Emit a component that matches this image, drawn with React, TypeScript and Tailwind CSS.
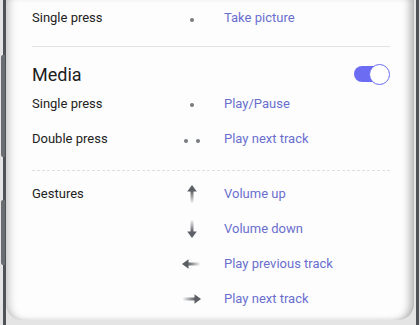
import type { ReactNode } from 'react'

const font = { fontFamily: 'Roboto, "Noto Sans", sans-serif' }

function Dot() {
  return <span className="block w-[4px] h-[4px] rounded-full bg-[#777a7e]" />
}

function Arrow({ dir }: { dir: 'up' | 'down' | 'left' | 'right' }) {
  const rot = { up: 0, down: 180, left: 270, right: 90 }[dir]
  const id = `fade-${dir}`
  return (
    <svg width="18" height="18" viewBox="0 0 18 18" aria-hidden>
      <defs>
        <linearGradient id={id} x1="0" y1="0" x2="0" y2="1">
          <stop offset="0" stopColor="#5c5f63" stopOpacity="1" />
          <stop offset="1" stopColor="#5c5f63" stopOpacity="0.05" />
        </linearGradient>
      </defs>
      <g transform={`rotate(${rot} 9 9)`}>
        <polygon points="9,0 13.8,6.5 4.2,6.5" fill="#5c5f63" />
        <rect x="7.5" y="6" width="3" height="12" fill={`url(#${id})`} />
      </g>
    </svg>
  )
}

function Row({
  label,
  icon,
  action,
  className = '',
}: {
  label: string
  icon: ReactNode
  action: string
  className?: string
}) {
  return (
    <div className={`flex items-center h-[24px] ${className}`}>
      <span className="w-[144px] text-[13px] text-[#222]">{label}</span>
      <span className="w-[32px] flex justify-center items-center gap-[8px]">
        {icon}
      </span>
      <span className="ml-[16px] text-[13px] text-[#6a6fcf]">{action}</span>
    </div>
  )
}

export default function App() {
  return (
    <div
      className="relative w-[420px] h-[325px] overflow-hidden bg-[#e4e4e4] flex"
      style={font}
    >
      {/* left frame */}
      <div className="ml-[3px] w-[3px] h-full bg-[#4f5256]" />
      <div className="absolute left-[1px] top-[55px] w-[4px] h-[102px] rounded-l-[2px] bg-[#6a6d72]" />
      <div className="absolute left-[1px] top-[200px] w-[4px] h-[65px] rounded-l-[2px] bg-[#6a6d72]" />

      {/* screen */}
      <div className="flex-1 h-[320px] bg-[#fdfdfd] rounded-b-[16px] shadow-[inset_9px_0_8px_-6px_rgba(0,0,0,0.22),inset_-10px_0_9px_-6px_rgba(0,0,0,0.3),inset_0_-4px_6px_-4px_rgba(0,0,0,0.12)] pl-[26px] pr-[24px]">
        <Row
          label="Single press"
          icon={<span className="mt-[4px]"><Dot /></span>}
          action="Take picture"
          className="mt-[6px]"
        />
        <div className="mt-[16px] h-px bg-[#e3e3e3]" />

        <div className="mt-[15px] h-[24px] flex items-center justify-between">
          <span className="text-[18px] text-[#1d1d1d]">Media</span>
          <span className="relative w-[36px] h-[21px] flex items-center">
            <span className="absolute left-0 right-[4px] h-[16px] rounded-full bg-[#6c6cf2]" />
            <span className="absolute right-0 w-[21px] h-[21px] rounded-full bg-white border-[1.5px] border-[#6c6cf2]" />
          </span>
        </div>

        <Row
          label="Single press"
          icon={<span className="mt-[2px]"><Dot /></span>}
          action="Play/Pause"
          className="mt-[6px]"
        />
        <Row
          label="Double press"
          icon={
            <>
              <span className="mt-[4px]"><Dot /></span>
              <span className="mt-[4px]"><Dot /></span>
            </>
          }
          action="Play next track"
          className="mt-[11px]"
        />
        <div className="mt-[19px] border-t border-dashed border-[#dedede]" />

        <Row
          label="Gestures"
          icon={<Arrow dir="up" />}
          action="Volume up"
          className="mt-[11px]"
        />
        <Row
          label=""
          icon={<Arrow dir="down" />}
          action="Volume down"
          className="mt-[11px]"
        />
        <Row
          label=""
          icon={<span className="-ml-[2px]"><Arrow dir="left" /></span>}
          action="Play previous track"
          className="mt-[11px]"
        />
        <Row
          label=""
          icon={<Arrow dir="right" />}
          action="Play next track"
          className="mt-[11px]"
        />
      </div>

      {/* right frame */}
      <div className="ml-[2px] mr-[1px] w-[3px] h-full bg-[#4f5256]" />
    </div>
  )
}
